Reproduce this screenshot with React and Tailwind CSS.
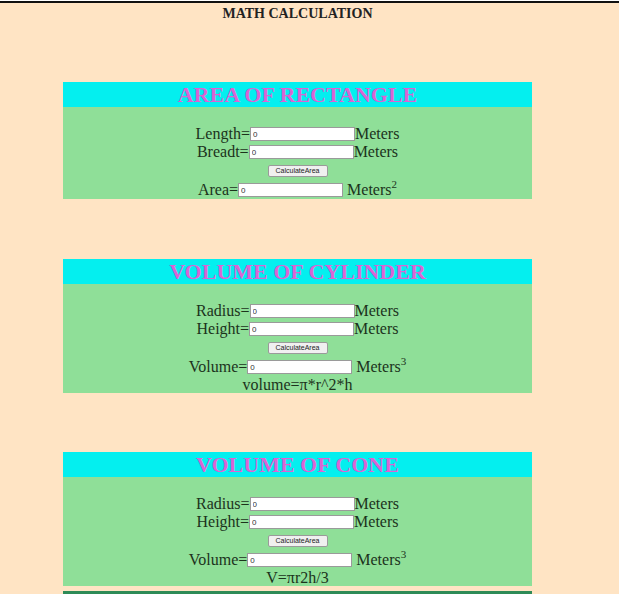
import React from "react";

const serif = { fontFamily: '"Liberation Serif", "Times New Roman", serif' };

function Field({ label, suffix, sup, gap }) {
  return (
    <div className="flex h-[18px] items-center justify-center text-[16px] leading-[18px]">
      <span>{label}=</span>
      <input
        readOnly
        value="0"
        className="h-[14px] w-[105px] border border-[#9a9a9a] bg-white px-[2px] text-[8px] leading-[12px] text-[#333] outline-none"
        style={{ fontFamily: '"Liberation Sans", Arial, sans-serif' }}
      />
      <span className={gap ? "ml-[4px]" : ""}>
        {suffix}
        {sup && <sup className="relative -top-[2px] align-top text-[11px] leading-none">{sup}</sup>}
      </span>
    </div>
  );
}

function Section({ title, a, b, c, sup, formula }) {
  return (
    <div className="ml-[63px] w-[469px]">
      <div className="flex h-[25px] items-center justify-center bg-[#04efef]">
        <h2 className="text-[22px] font-bold leading-[25px] text-[#d965d4]">{title}</h2>
      </div>
      <div className="bg-[#8fdf98] pt-[18px] text-[#1c331c]">
        <Field label={a} suffix="Meters" />
        <Field label={b} suffix="Meters" />
        <div className="flex h-[20px] items-center justify-center">
          <button
            className="h-[12px] w-[60px] rounded-[2px] border border-[#9a9a9a] bg-[#f0f0f0] p-0 text-[7px] leading-[10px] text-[#222]"
            style={{ fontFamily: '"Liberation Sans", Arial, sans-serif' }}
          >
            CalculateArea
          </button>
        </div>
        <Field label={c} suffix="Meters" sup={sup} gap />
        {formula ? (
          <div className="h-[17px] text-center text-[16px] leading-[17px]">{formula}</div>
        ) : null}
      </div>
    </div>
  );
}

export default function App() {
  return (
    <div className="min-h-[594px] bg-white pt-px pr-[2px]" style={serif}>
      <div className="min-h-[593px] border-t-2 border-[#111] bg-[#ffe4c4]">
        <div className="ml-[63px] w-[469px] pt-[3px] text-center text-[14px] font-bold leading-[16px] text-[#222]">
          MATH CALCULATION
        </div>
        <div className="h-[60px]" />
        <Section title="AREA OF RECTANGLE" a="Length" b="Breadt" c="Area" sup="2" />
        <div className="h-[60px]" />
        <Section
          title="VOLUME OF CYLINDER"
          a="Radius"
          b="Height"
          c="Volume"
          sup="3"
          formula="volume=π*r^2*h"
        />
        <div className="h-[59px]" />
        <Section
          title="VOLUME OF CONE"
          a="Radius"
          b="Height"
          c="Volume"
          sup="3"
          formula="V=πr2h/3"
        />
        <div className="h-[5px]" />
        <div className="ml-[63px] h-[20px] w-[469px] bg-[#2e8b57]" />
      </div>
    </div>
  );
}
